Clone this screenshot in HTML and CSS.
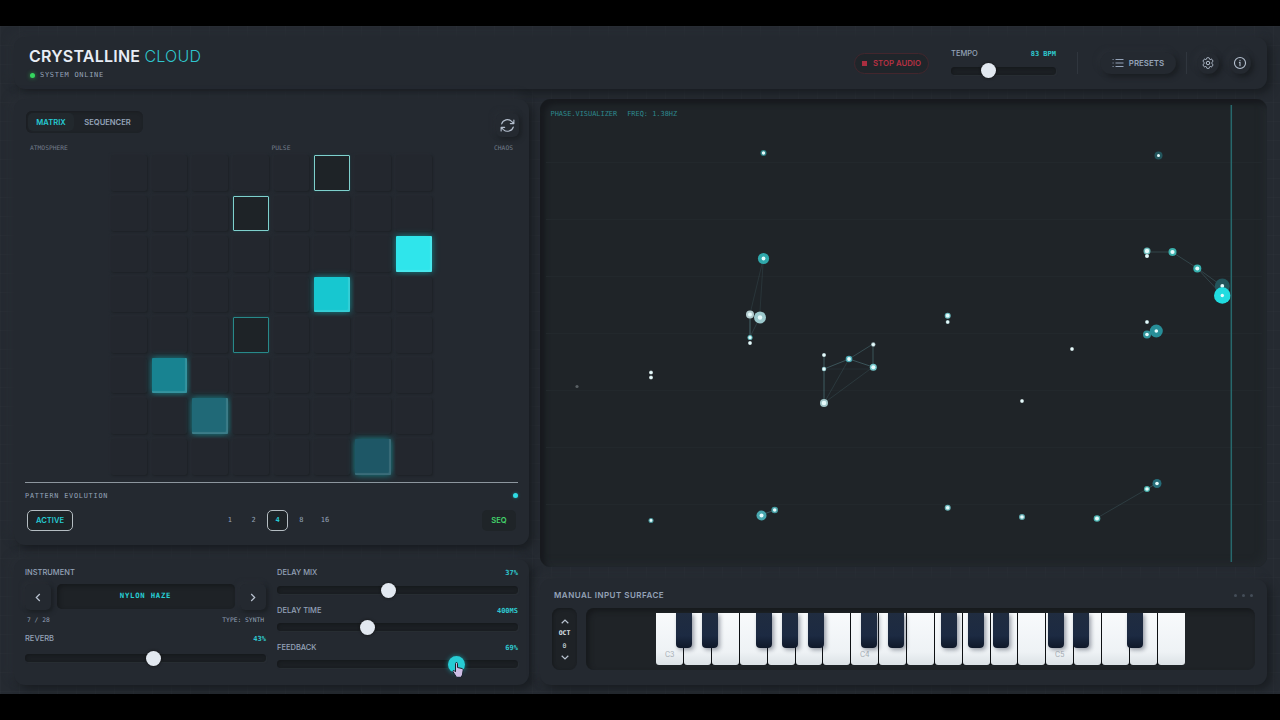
FILE: index.html
```html
<!DOCTYPE html>
<html>
<head>
    <meta charset="utf-8">
    <title>Crystalline Cloud</title>
    <link rel="stylesheet" href="styles.css">
</head>
<body>
    <div class="stage">
        <header class="panel header">
            <div class="brand">
                <div class="title">CRYSTALLINE <span>CLOUD</span></div>
                <div class="status"><i class="led"></i>SYSTEM ONLINE</div>
            </div>
            <div class="controls">
                <button class="stop"><i></i>STOP AUDIO</button>
                <div class="tempo">
                    <div class="label-row"><span class="label">TEMPO</span><span class="value">83 BPM</span></div>
                    <div class="slider"><div class="thumb" style="left: 35.6%"></div></div>
                </div>
                <div class="divider"></div>
                <button class="presets">
                    <svg width="12" height="10" viewBox="0 0 12 10" stroke="currentColor" stroke-width="1"><path d="M3.500 1.500h8M3.500 5h8M3.500 8.500h8M.6 1.500h1M.6 5h1M.6 8.500h1"/></svg>
                    PRESETS
                </button>
                <div class="divider second"></div>
                <button class="round">
                    <svg width="14" height="14" viewBox="0 0 24 24" fill="none" stroke="currentColor" stroke-width="1.7" stroke-linejoin="round"><path d="M9.6 3.9c.1-.5.5-.9 1.1-.9h2.6c.6 0 1 .4 1.1.9l.2 1.3c.1.4.3.7.6.8.4.2.8.1 1.2 0l1.2-.5c.5-.2 1.1 0 1.400.5l1.300 2.200c.3.5.2 1.100-.3 1.400l-1 .9c-.3.2-.4.6-.4 1v1c0 .4.1.7.4 1l1 .8c.4.4.6 1 .3 1.500l-1.300 2.200c-.3.5-.9.7-1.400.5l-1.200-.5c-.4-.1-.8-.1-1.200.1-.3.2-.5.5-.6.9l-.2 1.200c-.1.6-.5 1-1.100 1h-2.600c-.6 0-1-.4-1.100-1l-.2-1.200c-.1-.4-.3-.7-.6-.9-.4-.2-.8-.2-1.200-.1l-1.200.5c-.5.2-1.100 0-1.400-.5l-1.300-2.200c-.3-.5-.2-1.100.3-1.500l1-.8c.3-.3.4-.6.4-1v-1c0-.4-.1-.8-.4-1l-1-.9c-.5-.3-.6-.9-.3-1.400L5 6c.3-.5.9-.7 1.400-.5l1.200.5c.4.1.8.2 1.200 0 .3-.1.5-.4.6-.8z"/><circle cx="12" cy="12" r="3"/></svg>
                </button>
                <button class="round">
                    <svg width="14" height="14" viewBox="0 0 24 24" fill="none" stroke="currentColor" stroke-width="1.9" stroke-linecap="round"><circle cx="12" cy="12" r="9.5"/><path d="M11 11h1v5.500M12 7.500v.2"/></svg>
                </button>
            </div>
        </header>

        <main class="columns">
            <div class="left">
                <section class="panel matrix">
                    <div class="matrix-top">
                        <div class="tabs"><span class="tab on">MATRIX</span><span class="tab">SEQUENCER</span></div>
                        <button class="refresh">
                            <svg width="17" height="17" viewBox="0 0 24 24" fill="none" stroke="currentColor" stroke-width="1.6" stroke-linecap="round" stroke-linejoin="round"><path d="M16 9.3h5v-5M3 19.600v-5h5M3.800 9.800a8.500 8.500 0 0 1 14-3.700L21 9.300M3 14.600l3.200 3.200a8.500 8.500 0 0 0 14-3.700"/></svg>
                        </button>
                    </div>
                    <div class="zones"><span>ATMOSPHERE</span><span>PULSE</span><span>CHAOS</span></div>
                    <div class="grid" id="grid"></div>
                    <div class="evolution">
                        <div class="evo-head"><span>PATTERN EVOLUTION</span><i></i></div>
                        <div class="evo-row">
                            <button class="active-btn">ACTIVE</button>
                            <div class="steps"><span>1</span><span>2</span><span class="on">4</span><span>8</span><span>16</span></div>
                            <button class="seq">SEQ</button>
                        </div>
                    </div>
                </section>

                <section class="panel sound">
                    <div class="instrument">
                        <div class="label">INSTRUMENT</div>
                        <div class="picker">
                            <button class="arrow"><svg width="6" height="9" viewBox="0 0 6 9"><path d="M4.800 1L1.300 4.500 4.800 8"/></svg></button>
                            <div class="screen">NYLON HAZE</div>
                            <button class="arrow"><svg width="6" height="9" viewBox="0 0 6 9"><path d="M1.200 1l3.500 3.500L1.200 8"/></svg></button>
                        </div>
                        <div class="meta"><span>7 / 28</span><span>TYPE: SYNTH</span></div>
                        <div class="label-row"><span class="label">REVERB</span><span class="value">43%</span></div>
                        <div class="slider"><div class="thumb" style="left: 53.2%"></div></div>
                    </div>
                    <div class="delay">
                        <div class="label-row"><span class="label">DELAY MIX</span><span class="value">37%</span></div>
                        <div class="slider"><div class="thumb" style="left: 46.4%"></div></div>
                        <div class="label-row"><span class="label">DELAY TIME</span><span class="value">400MS</span></div>
                        <div class="slider"><div class="thumb" style="left: 37.6%"></div></div>
                        <div class="label-row"><span class="label">FEEDBACK</span><span class="value">69%</span></div>
                        <div class="slider">
                            <div class="thumb hot" style="left: 74.6%"></div>
                            <svg class="cursor" viewBox="0 0 12 16"><path d="M3.500 1.500c0-1.300 2-1.300 2 0v4l4.500 1c1 .3 1.300 1 1.100 2l-.7 4.500-1.500 2.300H4.500L1 9.700c-.5-1 .8-1.700 1.500-.9l1 1z"/></svg>
                        </div>
                    </div>
                </section>
            </div>

            <div class="right">
                <section class="visualizer">
                    <div class="readout"><span>PHASE.VISUALIZER</span><span>FREQ: 1.38HZ</span></div>
                    <svg class="field" id="field" viewBox="540 99 727 468"></svg>
                </section>

                <section class="panel manual">
                    <div class="manual-head"><span>MANUAL INPUT SURFACE</span><div class="dots"><i></i><i></i><i></i></div></div>
                    <div class="manual-row">
                        <div class="octave">
                            <svg width="8" height="5" viewBox="0 0 8 5"><path d="M.7 4.200L4 1l3.300 3.200"/></svg>
                            <b>OCT</b>
                            <span>0</span>
                            <svg width="8" height="5" viewBox="0 0 8 5"><path d="M.7.8L4 4 7.300.8"/></svg>
                        </div>
                        <div class="bed"><div class="keys" id="keys"></div></div>
                    </div>
                </section>
            </div>
        </main>
    </div>
    <script>
        // matrix cells that are switched on
        const cells = { 5: 'ring', 11: 'ring', 23: 'lit a', 29: 'lit b', 35: 'ring dim', 41: 'lit c', 50: 'lit d', 62: 'lit e' };
        let html = '';
        for (let i = 0; i < 64; i++) {
            html += '<div class="cell ' + (cells[i] || '') + '"></div>';
        }
        document.getElementById('grid').innerHTML = html;

        // piano keys, black ones are offset from the left end of the keyboard
        const names = { 0: 'C3', 7: 'C4', 14: 'C5' };
        const black = [19.5, 45.5, 99.5, 125.5, 151.5, 204.8, 231.3, 284.5, 311.5, 336.5, 391.3, 416.5, 470.8];
        html = '';
        for (let i = 0; i < 19; i++) {
            html += '<div class="white">' + (names[i] || '') + '</div>';
        }
        black.forEach(x => { html += '<div class="black" style="left: ' + x + 'px"></div>'; });
        document.getElementById('keys').innerHTML = html;

        // x, y, radius, halo colour, core radius
        const nodes = [
            [763.5, 153, 3, '#2b7f83', 1.7], [1158.5, 155.5, 4, '#23565d', 1.5],
            [763.5, 258.5, 5.6, '#2fa8ab', 1.9], [750, 314.5, 4, '#b4cdd0', 2],
            [760, 317.5, 6, '#9cc9cd', 2.2], [750, 337.5, 2.5, '#62bfc2', 1.5],
            [750, 343, 1.9, '#b3c6c9', 1.5], [651, 372.5, 2, '#a9b3b7', 1.5],
            [651, 377.5, 2, '#a9b3b7', 1.5], [577, 386.5, 1.6, '#596064', 0],
            [824, 355, 2, '#a4bcc0', 1.5], [824, 369, 2.2, '#8dc3c8', 1.5],
            [849, 359, 3.3, '#49aab5', 1.9], [873.3, 344.5, 2.2, '#9bb2b6', 1.5],
            [873.3, 367.3, 3.5, '#71c4c8', 2], [824, 403, 4, '#a1c5c8', 2.3],
            [947.7, 315.7, 3, '#6bbcc0', 1.9], [947.7, 322, 2, '#91b4b7', 1.5],
            [1072, 349, 1.9, '#a8b5b8', 1.5], [1022, 401, 1.9, '#a8b5b8', 1.5],
            [1147, 251, 3.5, '#69b9b9', 2.2], [1147, 256, 2, '#c6dddf', 1.5],
            [1172.5, 252, 4, '#3bafab', 2.1], [1197.3, 268.5, 4, '#36b0ae', 2],
            [1222.3, 286, 7.5, '#23545b', 1.9], [1222.3, 295.5, 8.3, '#20dce0', 1.7],
            [1147, 322, 2, '#99b1b5', 1.5], [1147, 334.5, 4, '#31939a', 1.8],
            [1156.3, 331, 6.5, '#278e98', 1.8], [651, 520.5, 2.5, '#4c9ca1', 1.4],
            [761.5, 515.5, 5, '#48a7ae', 2], [774.7, 510, 3.3, '#459da3', 1.8],
            [947.7, 507.7, 3, '#69b4b8', 1.8], [1022, 517, 3, '#61abb0', 1.8],
            [1097, 518.5, 3.3, '#4eb6b3', 2], [1147, 489, 3, '#4ab4af', 1.8],
            [1157, 483.5, 4.5, '#266d7a', 1.8]
        ];
        const links = [
            [763, 264, 760, 311, .1], [762, 264, 750, 314, .1], [750, 314, 750, 337, .4], [760, 317, 750, 337, .15],
            [824, 355, 824, 403, .35], [824, 369, 849, 359, .3], [849, 359, 873, 344, .25], [849, 359, 873, 367, .3],
            [873, 344, 873, 367, .3], [824, 403, 849, 359, .12], [824, 403, 873, 367, .12], [824, 369, 873, 369, .06],
            [1147, 252, 1172, 252, .2], [1172, 252, 1197, 268, .2], [1197, 268, 1222, 286, .2], [1197, 268, 1222, 295, .2],
            [1147, 334, 1156, 331, .8], [761, 515, 775, 510, .3], [1097, 518, 1147, 489, .15], [1147, 489, 1157, 483, .3]
        ];
        html = '';
        for (let y = 162; y < 520; y += 57) {
            html += '<path d="M546 ' + (y + .5) + 'H1262" stroke="#22282c"/>';
        }
        links.forEach(l => {
            html += '<path d="M' + l[0] + ' ' + l[1] + 'L' + l[2] + ' ' + l[3] + '" stroke="#7bc3cc" opacity="' + l[4] + '"/>';
        });
        nodes.forEach(n => {
            html += '<circle cx="' + n[0] + '" cy="' + n[1] + '" r="' + n[2] + '" fill="' + n[3] + '"/>';
            html += '<circle cx="' + n[0] + '" cy="' + n[1] + '" r="' + n[4] + '" fill="#e6fbfc"/>';
        });
        html += '<path d="M1231.3 105V562" stroke="#27686c" stroke-width="1.5"/>';
        document.getElementById('field').innerHTML = html;
    </script>
</body>
</html>
```
FILE: styles.css
```css
* {
    box-sizing: border-box;
}
body {
    margin: 0;
    height: 720px;
    padding: 26px 0;
    background: #000;
    color: #94a3b8;
    font-family: Inter, sans-serif;
    overflow: hidden;
}
button {
    border: none;
    background: none;
    padding: 0;
    color: inherit;
    font-family: inherit;
}
svg {
    display: block;
    flex-shrink: 0;
}
.stage {
    height: 668px;
    padding: 11px 13px 9px 14px;
    background-color: #252a31;
    background-image: linear-gradient(rgba(255, 255, 255, 0.015) 1px, transparent 1px), linear-gradient(90deg, rgba(255, 255, 255, 0.015) 1px, transparent 1px);
    background-size: 19px 19px;
    overflow: hidden;
}
.panel {
    background: #242930;
    border-radius: 11px;
    box-shadow: 4px 4px 9px #191d21, -4px -4px 9px #292e35;
}
.header {
    display: flex;
    justify-content: space-between;
    height: 52px;
    padding: 0 16px 0 15px;
}
.title {
    margin-top: 9px;
    font-size: 16px;
    line-height: 21px;
    font-weight: 600;
    letter-spacing: 0.22px;
    color: #e8edf5;
}
.title span {
    font-weight: 300;
    color: #2fc5cd;
}
.status {
    display: flex;
    align-items: center;
    margin-top: 3px;
    font: 7px/10px "DejaVu Sans Mono", monospace;
    letter-spacing: 0.7px;
}
.led {
    width: 5px;
    height: 5px;
    margin: 0 5px 0 1px;
    border-radius: 50%;
    background: #35d65f;
    box-shadow: 0 0 4px #2a9c48;
}
.controls {
    display: flex;
    align-items: center;
}
.stop {
    display: flex;
    align-items: center;
    justify-content: center;
    width: 75px;
    height: 21px;
    margin-right: 22px;
    border: 1px solid #43262d;
    border-radius: 11px;
    background: #20252a;
    color: #b53143;
    font-size: 7.8px;
    font-weight: 600;
}
.stop i {
    width: 5px;
    height: 5px;
    margin-right: 6px;
    background: #a92e40;
}
.tempo {
    width: 105px;
    margin-top: -3px;
}
.label-row {
    display: flex;
    justify-content: space-between;
    line-height: 10px;
}
.label {
    font-size: 7.5px;
    font-weight: 500;
    line-height: 10px;
}
.value {
    color: #2fc9d1;
    font: bold 7px/10px "DejaVu Sans Mono", monospace;
}
.slider {
    position: relative;
    height: 8px;
    border-radius: 4px;
    background: #1b1f23;
    box-shadow: inset 1px 1px 3px #15181b, 1px 1px 1px #292e34;
}
.tempo .slider {
    margin-top: 8px;
}
.thumb {
    position: absolute;
    top: -3.5px;
    width: 15px;
    height: 15px;
    margin-left: -7.5px;
    border-radius: 50%;
    background: #e2e8f0;
    box-shadow: 0 0 3px #111;
}
.thumb.hot {
    width: 17px;
    height: 17px;
    top: -4.5px;
    margin-left: -8.5px;
    background: #27ccd4;
    box-shadow: 0 0 5px #1a8a91;
}
.cursor {
    position: absolute;
    left: 175px;
    top: 2px;
    width: 12px;
    height: 16px;
    fill: #cdbde4;
    stroke: #17202b;
}
.divider {
    width: 1px;
    height: 22px;
    margin: 0 22px 0 21px;
    background: #30363e;
}
.presets {
    display: flex;
    align-items: center;
    justify-content: center;
    gap: 5px;
    width: 76px;
    height: 22px;
    border-radius: 11px;
    box-shadow: 3px 3px 5px #1a1e22, -2px -2px 5px #292e35;
    font-size: 7.9px;
    font-weight: 600;
}
.divider.second {
    margin: 0 10px;
}
.round {
    display: flex;
    align-items: center;
    justify-content: center;
    width: 22px;
    height: 22px;
    margin-right: 10px;
    border-radius: 50%;
    box-shadow: 3px 3px 5px #1a1e22, -2px -2px 5px #292e35;
    color: #b5c0cf;
}
.round:last-child {
    margin-right: 0;
}
.columns {
    display: flex;
    gap: 11px;
    margin-top: 10px;
}
.left {
    display: flex;
    flex-direction: column;
    gap: 14px;
    width: 515px;
}
.matrix {
    height: 446px;
    padding: 12px 11px 0;
}
.matrix-top {
    display: flex;
    justify-content: space-between;
    height: 29px;
}
.tabs {
    display: flex;
    width: 117px;
    height: 22px;
    margin-left: 1px;
    padding: 2px;
    border-radius: 6px;
    background: #1f2328;
    box-shadow: inset 1px 1px 3px #1a1d21;
    font-size: 7.6px;
    font-weight: 600;
    line-height: 20px;
    text-align: center;
}
.tab {
    flex: 1;
}
.tab.on {
    flex: 0 0 46px;
    border-radius: 5px;
    background: #22282d;
    color: #26cbd3;
}
.refresh {
    display: flex;
    align-items: center;
    justify-content: center;
    width: 23px;
    height: 24px;
    margin: 2px -1px 0 0;
    border-radius: 6px;
    box-shadow: 2px 2px 5px #1a1e22, -2px -2px 5px #292e35;
    color: #b5c0cf;
}
.zones {
    display: flex;
    justify-content: space-between;
    height: 15px;
    padding: 3px 5px 0;
    color: #737d8b;
    font: 6.3px/10px "DejaVu Sans Mono", monospace;
}
.grid {
    display: grid;
    grid-template-columns: repeat(8, 1fr);
    grid-auto-rows: 1fr;
    gap: 5px;
    width: 320.5px;
    height: 319.5px;
    margin-left: 86px;
}
.cell {
    border-radius: 2px;
    background: #23272e;
    box-shadow: 1px 1px 2px #1d2126, -1px -1px 2px #272b32;
}
.ring {
    border: 1px solid #7fd0cd;
    border-radius: 1px;
    background: #1e2327;
    box-shadow: 0 0 2px #164a4c;
}
.ring.dim {
    border-color: #28898a;
}
.lit {
    border-radius: 1px;
    box-shadow: inset -2px -2px 1px rgba(255, 255, 255, 0.13), 0 0 7px #13878e;
}
.lit.a {
    background: #2fe5eb;
}
.lit.b {
    background: #17c7d0;
}
.lit.c {
    background: #188391;
}
.lit.d {
    background: #206977;
}
.lit.e {
    background: #1e5766;
}
.evolution {
    margin-top: 7.5px;
    border-top: 1.5px solid #8d969e;
}
.evo-head {
    display: flex;
    justify-content: space-between;
    align-items: center;
    height: 25px;
    font: 6.8px/10px "DejaVu Sans Mono", monospace;
    letter-spacing: 0.8px;
}
.evo-head i {
    width: 5px;
    height: 5px;
    border-radius: 50%;
    background: #2fdce4;
    box-shadow: 0 0 3px #1c858c;
}
.evo-row {
    display: flex;
    align-items: center;
    height: 24px;
    padding: 0 2px;
}
.active-btn {
    width: 46px;
    height: 21px;
    border: 1px solid #b5bdc2;
    border-radius: 5px;
    background: #1e2327;
    color: #26cbd3;
    font-size: 7.6px;
    font-weight: 600;
}
.steps {
    display: flex;
    gap: 2px;
    margin-left: 146px;
    font: 7px/20px "DejaVu Sans Mono", monospace;
}
.steps span {
    width: 21.8px;
    height: 21px;
    text-align: center;
}
.steps .on {
    border: 1px solid #b5bdc2;
    border-radius: 5px;
    background: #1e2327;
    color: #26cbd3;
    font-weight: bold;
    line-height: 18px;
}
.seq {
    width: 34px;
    height: 21px;
    margin-left: auto;
    border-radius: 5px;
    background: #1f2428;
    color: #43d46b;
    font-size: 7.6px;
    font-weight: 600;
}
.sound {
    display: flex;
    gap: 11px;
    height: 126px;
    padding: 9px 11px 0;
}
.instrument,
.delay {
    width: 241px;
}
.picker {
    display: flex;
    justify-content: space-between;
    margin: 6px 0 5px;
}
.arrow {
    display: flex;
    align-items: center;
    justify-content: center;
    width: 26px;
    height: 26px;
    border-radius: 5px;
    box-shadow: 2px 2px 4px #1a1e22, -2px -2px 4px #292e35;
}
.arrow svg,
.octave svg {
    fill: none;
    stroke: #bac4d1;
    stroke-width: 1.2;
}
.screen {
    width: 178px;
    height: 25px;
    border-radius: 5px;
    background: #1e2226;
    box-shadow: inset 2px 2px 4px #16191c;
    color: #27cdd4;
    font: bold 7.3px/24px "DejaVu Sans Mono", monospace;
    letter-spacing: 0.75px;
    text-align: center;
}
.meta {
    display: flex;
    justify-content: space-between;
    height: 13px;
    margin-bottom: 6px;
    padding: 0 2px;
    font: 6.3px/9px "DejaVu Sans Mono", monospace;
}
.instrument .slider {
    margin-top: 10px;
}
.delay .slider {
    margin: 8px 0 12px;
}
.delay .slider:nth-child(n+3) {
    margin-top: 7px;
}
.right {
    display: flex;
    flex-direction: column;
    gap: 12px;
    width: 727px;
}
.visualizer {
    position: relative;
    height: 468px;
    border-radius: 11px;
    background: #1f2428;
    box-shadow: inset 5px 5px 5px #171a1e, inset -4px -4px 7px #23282d;
}
.readout {
    position: absolute;
    left: 10.5px;
    top: 10px;
    display: flex;
    gap: 10px;
    color: #2d888d;
    font: 6.93px/10px "DejaVu Sans Mono", monospace;
}
.field {
    width: 727px;
    height: 468px;
}
.manual {
    height: 106px;
    padding: 10px 12px 0;
}
.manual-head {
    display: flex;
    justify-content: space-between;
    align-items: center;
    height: 12px;
    padding: 0 2px;
    font-size: 8px;
    font-weight: 600;
    letter-spacing: 0.48px;
}
.dots {
    display: flex;
    gap: 5px;
}
.dots i {
    width: 3px;
    height: 3px;
    border-radius: 50%;
    background: #444d58;
}
.manual-row {
    display: flex;
    gap: 9px;
    margin-top: 7px;
}
.octave {
    display: flex;
    flex-direction: column;
    align-items: center;
    justify-content: space-between;
    width: 25px;
    height: 62px;
    padding: 11px 0 10px;
    border-radius: 8px;
    background: #1e2226;
    box-shadow: inset 1px 1px 3px #16191c;
    color: #dce3eb;
    font: 6.5px/8px "DejaVu Sans Mono", monospace;
}
.bed {
    flex: 1;
    height: 62px;
    padding: 5px 0 0 70.3px;
    border-radius: 8px;
    background: #1f2327;
    box-shadow: inset 3px 3px 5px #16191c;
}
.keys {
    position: relative;
    display: flex;
    gap: 1px;
    width: 528.3px;
    height: 52px;
    background: #0e1114;
    border-radius: 0 0 4px 4px;
}
.white {
    flex: 1;
    padding-top: 37px;
    border-radius: 0 0 3px 3px;
    background: linear-gradient(#f8fafc, #eef2f5 75%, #dce2e6);
    color: #a5acb4;
    font-size: 7px;
    line-height: 9px;
    text-align: center;
}
.black {
    position: absolute;
    top: 0;
    width: 16px;
    height: 35px;
    border-radius: 0 0 4px 4px;
    background: linear-gradient(#202c40, #1c2a42 65%, #0f1829);
    box-shadow: 2px 2px 4px rgba(15, 23, 42, 0.4);
}
```
